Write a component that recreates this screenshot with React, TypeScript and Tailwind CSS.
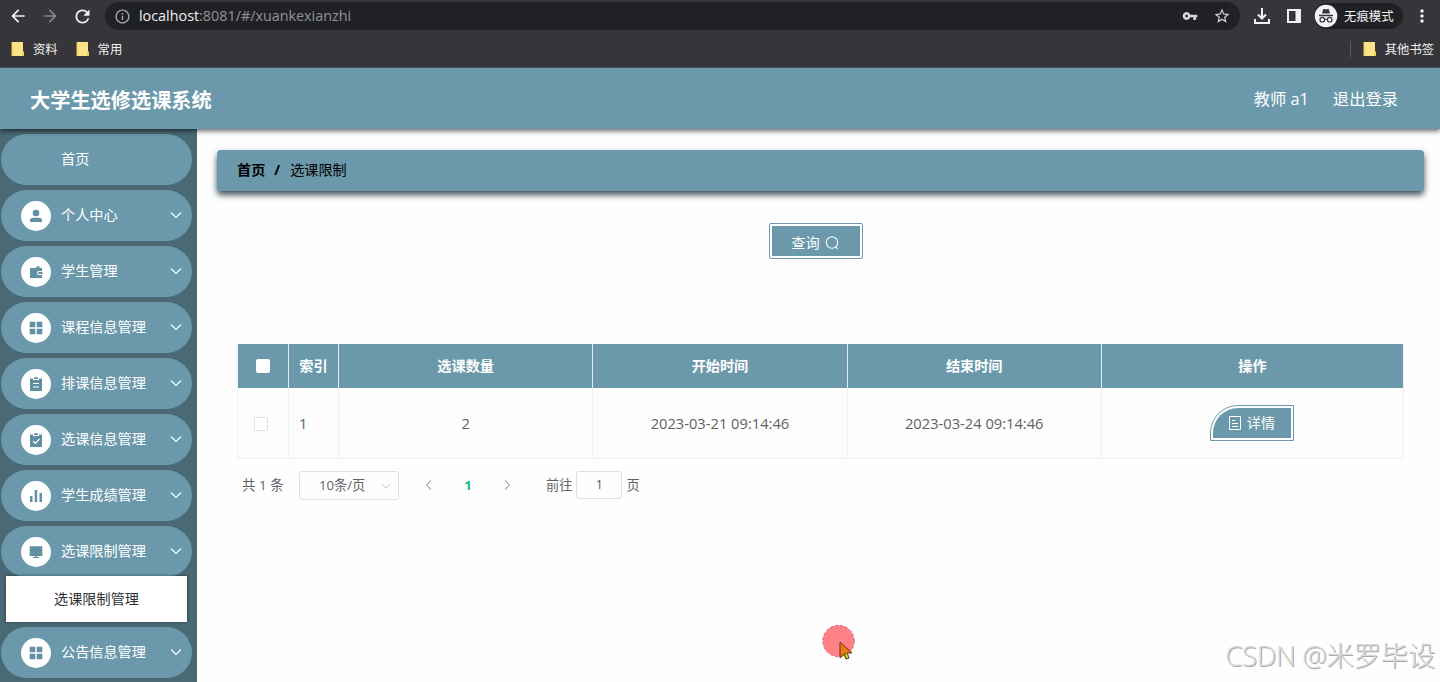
import type { ReactNode } from "react";
import { MdArrowBack, MdArrowForward, MdRefresh, MdInfoOutline, MdVpnKey, MdStarOutline, MdMoreVert } from "react-icons/md";

const menuItems = [
  { label: "首页", icon: "" },
  { label: "个人中心", icon: "user" },
  { label: "学生管理", icon: "wallet" },
  { label: "课程信息管理", icon: "grid" },
  { label: "排课信息管理", icon: "order" },
  { label: "选课信息管理", icon: "claim" },
  { label: "学生成绩管理", icon: "data" },
  { label: "选课限制管理", icon: "platform", children: ["选课限制管理"] },
  { label: "公告信息管理", icon: "grid" },
];

const columns = ["选课数量", "开始时间", "结束时间"];

const rows = [{ index: 1, values: ["2", "2023-03-21 09:14:46", "2023-03-24 09:14:46"] }];

const menuIcons: Record<string, ReactNode> = {
  user: (
    <>
      <circle cx="7" cy="4" r="3.3" />
      <path d="M1 13v-1.6C1 9.500 2.400 8.700 4 8.700h6c1.600 0 3 .8 3 2.700V13z" />
    </>
  ),
  wallet: (
    <>
      <path d="M1 3h5.500L9 .8 11.300 3H13v3H10a2 2 0 0 0 0 4h3v3H1z" />
      <path d="M10 7h3.500v2H10a1 1 0 0 1 0-2z" />
    </>
  ),
  grid: <path d="M.7.700h5.600v5.600H.7zM7.700.700h5.600v5.600H7.700zM.7 7.700h5.600v5.600H.7zM7.700 7.700h5.600v5.600H7.700z" />,
  order: (
    <>
      <path d="M1 1.500h3V3h6V1.500h3V14H1z" />
      <path d="M5 .3h4V2H5z" />
      <path d="M4 6.500h6M4 10h6" stroke="white" />
    </>
  ),
  claim: (
    <>
      <path d="M1 1.500h3V3h6V1.500h3V14H1z" />
      <path d="M5 .3h4V2H5z" />
      <path d="M4 8l2.300 2.300L10.500 6" stroke="white" strokeWidth="1.200" fill="none" />
    </>
  ),
  data: <path d="M1 7h2.500v6H1zM5.700 1h2.500v12H5.700zM10.500 4H13v9h-2.500z" />,
  platform: <path d="M.7 1.200h12.600V11H.7zM6.200 11h1.600v1H10v1H4v-1h2.200z" />,
};

function Chevron({ className = "", d = "M1 3.500l5 5 5-5" }: { className?: string; d?: string }) {
  return (
    <svg viewBox="0 0 12 12" className={className} fill="none" stroke="currentColor" strokeWidth="1.1">
      <path d={d} />
    </svg>
  );
}

function Bookmark({ label }: { label: string }) {
  return (
    <div className="flex items-center gap-[8px]">
      <svg width="14" height="16" viewBox="0 0 14 16">
        <path d="M1 1h11v9l1 1v4H1z" fill="#fde388" />
        <path d="M1 1v14" stroke="#f2c94f" />
        <path d="M11 11h2v4h-2z" fill="#f2ca55" />
      </svg>
      <span className="pt-[2px] text-[12.300px] whitespace-nowrap text-[#f1f1f1]">{label}</span>
    </div>
  );
}

function BrowserBar() {
  return (
    <div className="h-[68px] shrink-0 border-b border-[#4c565c] bg-[#36363a]">
      <div className="flex h-8 items-center">
        <MdArrowBack className="ml-2 size-5 text-[#f0f0f0]" />
        <MdArrowForward className="ml-3 size-5 text-[#858588]" />
        <MdRefresh className="ml-3 size-[21px] text-[#f0f0f0]" />
        <div className="ml-3 flex h-7 w-[1135px] items-center rounded-full bg-[#202124] pr-[9px] pl-[9px]">
          <MdInfoOutline className="size-[17px] text-[#a5a6a9]" />
          <span className="ml-2 text-[14.350px] text-[#929498]">
            <span className="text-[#eeeeee]">localhost</span>:8081/#/xuankexianzhi
          </span>
          <MdVpnKey className="ml-auto size-4 text-[#d4d5d7]" />
          <MdStarOutline className="ml-[15px] size-[18px] text-[#d4d5d7]" />
        </div>
        <svg className="ml-[13px]" width="18" height="18" viewBox="0 0 18 18" fill="none" stroke="#f0f0f0" strokeWidth="2">
          <path d="M9 1v10M5 7.500l4 4 4-4M2 12v4h14v-4" />
        </svg>
        <svg className="ml-4" width="14" height="14" viewBox="0 0 14 14">
          <path d="M1 1h12v12H1z" fill="none" stroke="#f0f0f0" strokeWidth="2" />
          <path d="M8.500 1H13v12H8.500z" fill="#f0f0f0" />
        </svg>
        <div className="ml-[13px] flex h-[26px] w-[89px] items-center rounded-full bg-[#202124]">
          <svg width="24" height="24" viewBox="0 0 24 24">
            <circle cx="12" cy="12" r="11.300" fill="#f3f4f6" />
            <path d="M8 9.500L9.300 5h1.200l1.500.6 1.500-.6h1.200L16 9.500z" fill="#35363a" />
            <path d="M5 11.500h14" stroke="#35363a" strokeWidth="1.500" />
            <g fill="none" stroke="#35363a" strokeWidth="1.200">
              <circle cx="8.300" cy="15.700" r="2.300" />
              <circle cx="15.700" cy="15.700" r="2.300" />
              <path d="M10.500 15.500q1.500-1 3 0" />
            </g>
          </svg>
          <span className="ml-[6px] pt-[2px] text-[12.400px] text-[#f1f1f1]">无痕模式</span>
        </div>
        <MdMoreVert className="ml-[9px] size-5 text-[#f0f0f0]" />
      </div>
      <div className="flex h-[34px] items-center pr-[6px] pl-[11px]">
        <Bookmark label="资料" />
        <div className="w-[18px]" />
        <Bookmark label="常用" />
        <div className="mr-3 ml-auto h-4 w-px bg-[#5c5d61]" />
        <Bookmark label="其他书签" />
      </div>
    </div>
  );
}

function Header() {
  return (
    <header className="relative z-10 flex h-[61px] shrink-0 items-center bg-[#6b99ab] pt-[2px] pr-[42px] pl-[30px] text-white shadow-[0_2px_5px_rgba(0,0,0,0.6)]">
      <h1 className="pt-px text-[20.200px] font-bold">大学生选修选课系统</h1>
      <span className="ml-auto text-[16.300px]">教师 a1</span>
      <span className="ml-6 text-[16.300px]">退出登录</span>
    </header>
  );
}

function Sidebar() {
  return (
    <aside className="w-[197px] shrink-0 overflow-hidden bg-[#496a74] pt-[5px]">
      {menuItems.map((item, i) => (
        <div key={i}>
          <div className={`ml-px flex h-[51px] w-[191px] items-center rounded-full bg-[#6b99ab] pr-[10px] pl-5 text-white ${item.children ? "" : "mb-[5px]"}`}>
            <div className="flex w-10 shrink-0">
              {item.icon && (
                <div className="flex size-[30px] items-center justify-center rounded-full bg-white text-[#6190a3]">
                  <svg width="14" height="14" viewBox="0 0 14 14" fill="currentColor">
                    {menuIcons[item.icon]}
                  </svg>
                </div>
              )}
            </div>
            <span className="pb-[2px] text-[14.150px]">{item.label}</span>
            {item.icon && <Chevron className="mb-[2px] ml-auto size-3" />}
          </div>
          {item.children?.map((child) => (
            <div key={child} className="relative -mt-px mb-[5px] ml-[6px] flex h-[46px] w-[181px] items-center justify-center bg-white pb-px text-[14.150px] text-[#303133] shadow-[0_0_3px_rgba(0,0,0,0.5)]">
              {child}
            </div>
          ))}
        </div>
      ))}
    </aside>
  );
}

function DataTable() {
  const grid = "grid grid-cols-[51px_50px_254.300px_254.300px_254.300px_1fr]";
  return (
    <div className="mt-[85px] ml-[20px] w-[1167px] border-r border-b border-l border-[#eef0f5] text-[#606266]">
      <div className={`${grid} h-[44px] bg-[#6b99ab] text-center text-[14.150px] font-bold text-white`}>
        <div className="flex items-center justify-center border-r border-[#e4edf1]">
          <div className="size-[14px] rounded-[2px] bg-white" />
        </div>
        <div className="flex items-center justify-center border-r border-[#e4edf1]">索引</div>
        {columns.map((column) => (
          <div key={column} className="flex items-center justify-center border-r border-[#e4edf1]">{column}</div>
        ))}
        <div className="flex items-center justify-center">操作</div>
      </div>
      {rows.map((row) => (
        <div key={row.index} className={`${grid} h-[70px] bg-[#fdfdfd] text-[14.700px]`}>
          <div className="flex items-center justify-center border-r border-[#eef0f5] pt-px pr-[4px]">
            <div className="size-[14px] rounded-[2px] border border-[#dcdfe6] bg-white" />
          </div>
          <div className="flex items-center border-r border-[#eef0f5] pl-[10px]">{row.index}</div>
          {row.values.map((value) => (
            <div key={value} className="flex items-center justify-center border-r border-[#eef0f5]">{value}</div>
          ))}
          <div className="flex items-center justify-center pr-px">
            <button className="flex h-9 w-[84px] items-center justify-center rounded-tl-[28px] border border-[#6b99ab] bg-white p-[2px]">
              <span className="flex h-full w-full items-center justify-center gap-[6px] rounded-tl-[25px] bg-[#6b99ab] text-[14.150px] text-white">
                <svg width="12" height="14" viewBox="0 0 12 14" fill="none" stroke="white">
                  <path d="M.5.500h11v13H.5zM3 4.500h3M3 7.500h6M3 10.500h6" />
                </svg>
                详情
              </span>
            </button>
          </div>
        </div>
      ))}
    </div>
  );
}

function Pagination() {
  return (
    <div className="mt-[12px] ml-[25px] flex h-[29px] items-center text-[13.200px] text-[#606266]">
      <span className="w-[57px] text-[13.500px]">共 1 条</span>
      <div className="flex h-[29px] w-[100px] items-center rounded-[3px] border border-[#dcdfe6] pr-[7px] pl-[19px]">
        10条/页
        <Chevron className="ml-auto size-[10px] text-[#c0c4cc]" />
      </div>
      <Chevron d="M8 1.500L3.500 6 8 10.500" className="mb-px ml-6 size-3 text-[#a9adb5]" />
      <span className="w-[66px] text-center font-bold text-[#1abc8c]">1</span>
      <Chevron d="M4 1.500L8.500 6 4 10.500" className="mb-px size-3 text-[#a9adb5]" />
      <span className="ml-[33px]">前往</span>
      <div className="mx-1 mb-px flex h-[28px] w-[46px] items-center justify-center rounded-[3px] border border-[#dcdfe6]">1</div>
      <span>页</span>
    </div>
  );
}

export default function App() {
  return (
    <div className="relative flex h-[682px] w-[1440px] flex-col overflow-hidden bg-[#fefefe] font-['Open_Sans','Noto_Sans_CJK_SC',sans-serif] leading-normal">
      <BrowserBar />
      <Header />
      <div className="flex min-h-0 flex-1">
        <Sidebar />
        <main className="min-w-0 flex-1 pt-[21px] pl-5">
          <div className="flex h-[41px] w-[1207px] items-center rounded-[4px] bg-[#6b99ab] pb-[2px] pl-5 text-[14.150px] text-black shadow-[0_4px_6px_rgba(30,50,60,0.85)]">
            <span className="font-bold">首页</span>
            <span className="mr-[10px] ml-[9px] font-bold">/</span>
            <span>选课限制</span>
          </div>
          <button className="mt-[32px] ml-[552px] flex h-[36px] w-[94px] rounded-[2px] border border-[#6b99ab] bg-white p-[2px]">
            <span className="flex h-full w-full items-center justify-center gap-[5px] bg-[#6b99ab] pt-[3px] pr-[2px] text-[14.150px] text-white">
              查询
              <svg width="14" height="14" viewBox="0 0 14 14" fill="none" stroke="white" strokeWidth="1.100">
                <circle cx="7" cy="6.500" r="5.700" />
                <path d="M10.500 10.500l2.300 2.700" />
              </svg>
            </span>
          </button>
          <DataTable />
          <Pagination />
        </main>
      </div>

      {/* pointer highlight */}
      <svg className="absolute top-[623px] left-[821px]" width="38" height="40" viewBox="0 0 38 40">
        <circle cx="17.500" cy="18" r="15.700" fill="#ff8086" stroke="#dc666f" strokeDasharray="3 2" />
        <path d="M19 19v16l4-4 2 5 3-1-2-5h5z" fill="#e87a14" stroke="#6d300d" />
        <path d="M23.500 31l2 5 2.500-1-2-5z" fill="#d9dc28" stroke="#46420e" strokeWidth=".7" />
      </svg>
      <div className="absolute top-[637px] right-[5px] font-['Open_Sans','Noto_Sans_CJK_SC',sans-serif] text-[27.500px] leading-[38px] font-light tracking-[-0.300px] whitespace-nowrap text-[#d9d9d9] [text-shadow:1px_1px_0_#a9a9a9]">
        CSDN @米罗毕设
      </div>
    </div>
  );
}
